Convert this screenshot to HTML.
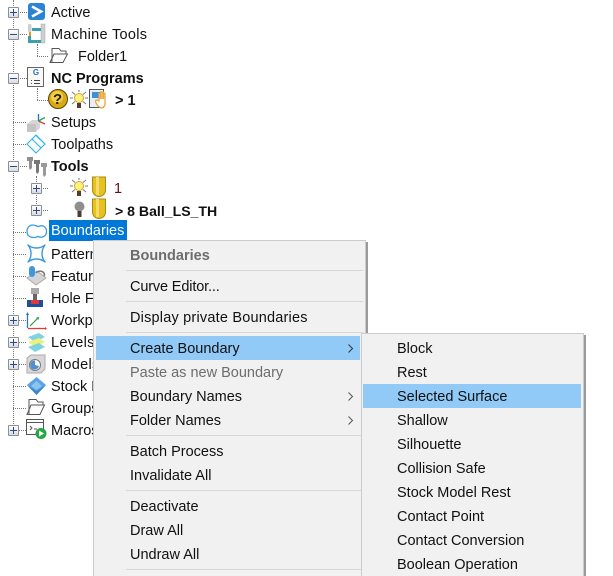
<!DOCTYPE html>
<html><head><meta charset="utf-8"><style>
html,body{margin:0;padding:0;background:#fff}
#r{position:relative;width:613px;height:576px;overflow:hidden;background:#fff;font:14.5px/20px "Liberation Sans",sans-serif;color:#111}
.t{position:absolute;white-space:nowrap;height:20px;margin-top:1px}
.b{font-weight:bold}
.x{position:absolute;width:9px;height:9px;border:1px solid #8a8f98;background:linear-gradient(#fff,#d8dbe0);border-radius:1px}
.x:before{content:"";position:absolute;left:1px;top:4px;width:7px;height:1px;background:#2b4a86}
.x.p:after{content:"";position:absolute;left:4px;top:1px;width:1px;height:7px;background:#2b4a86}
.v{position:absolute;width:0;border-left:1px dotted #777}
.h{position:absolute;height:0;border-top:1px dotted #777}
.m{position:absolute;background:#f1f1f1;border:1px solid #ccc;box-sizing:border-box;box-shadow:2px 2px 0 #9a9a9a}
.s{position:absolute;height:1px;background:#d7d7d7}
.hl{position:absolute;background:#91c9f7}
svg{position:absolute;overflow:visible}
</style></head><body><div id="r">
<div class="v" style="left:13px;top:0;height:430px"></div>
<div class="v" style="left:37px;top:44px;height:12px"></div>
<div class="v" style="left:37px;top:88px;height:12px"></div>
<div class="v" style="left:36px;top:176px;height:34px"></div>
<div class="h" style="left:18px;top:12px;width:9px"></div>
<div class="h" style="left:18px;top:34px;width:9px"></div>
<div class="h" style="left:37px;top:56px;width:11px"></div>
<div class="h" style="left:18px;top:78px;width:9px"></div>
<div class="h" style="left:37px;top:100px;width:11px"></div>
<div class="h" style="left:13px;top:122px;width:13px"></div>
<div class="h" style="left:13px;top:144px;width:13px"></div>
<div class="h" style="left:18px;top:166px;width:9px"></div>
<div class="h" style="left:41px;top:188px;width:7px"></div>
<div class="h" style="left:41px;top:210px;width:7px"></div>
<div class="h" style="left:13px;top:232px;width:13px"></div>
<div class="h" style="left:13px;top:254px;width:13px"></div>
<div class="h" style="left:13px;top:276px;width:13px"></div>
<div class="h" style="left:13px;top:298px;width:13px"></div>
<div class="h" style="left:18px;top:320px;width:8px"></div>
<div class="h" style="left:18px;top:342px;width:8px"></div>
<div class="h" style="left:18px;top:364px;width:8px"></div>
<div class="h" style="left:13px;top:386px;width:13px"></div>
<div class="h" style="left:13px;top:408px;width:13px"></div>
<div class="h" style="left:18px;top:430px;width:8px"></div>

<div class="x p" style="left:8px;top:7px"></div>
<div class="x" style="left:8px;top:29px"></div>
<div class="x" style="left:8px;top:73px"></div>
<div class="x" style="left:8px;top:161px"></div>
<div class="x p" style="left:31px;top:183px"></div>
<div class="x p" style="left:31px;top:205px"></div>
<div class="x p" style="left:8px;top:315px"></div>
<div class="x p" style="left:8px;top:337px"></div>
<div class="x p" style="left:8px;top:359px"></div>
<div class="x p" style="left:8px;top:425px"></div>

<!-- Active -->
<svg style="left:28px;top:3px" width="18" height="18"><rect width="17" height="17" rx="3" fill="#2b83d3"/><path d="M4 3.500L13 8.500L4 13.500" fill="none" stroke="#fff" stroke-width="2.600"/></svg>
<!-- Machine tools -->
<svg style="left:27px;top:23px" width="19" height="21"><rect x="14" y="1" width="4" height="19" fill="#c9cfd2" stroke="#aaa" stroke-width=".5"/><rect x="1" y="17" width="13" height="3" fill="#3f9fa8"/><rect x="5" y="5" width="9" height="3" fill="#3f9fa8"/><rect x="1" y="1" width="3.500" height="8" rx="1.500" fill="#c9cfd2"/><rect x="2" y="9" width="2" height="4" fill="#e8951f"/><rect x="1" y="13" width="3" height="7" fill="#3f9fa8"/></svg>
<!-- Folder1 -->
<svg style="left:49px;top:47px" width="20" height="17"><path d="M3 15V1.500H10L12 4H17V7M1 15.500H14L18.500 7H5L1 15.500Z" fill="#fff" stroke="#555" stroke-width="1"/></svg>
<!-- NC -->
<svg style="left:27px;top:67px" width="18" height="21"><rect x=".5" y=".5" width="16" height="19" fill="#f8f8f8" stroke="#666"/><path d="M4 13.500h1M7 13.500h6M4 16.500h1M7 16.500h6" stroke="#444"/></svg>
<div style="position:absolute;left:32px;top:69px;width:8px;font:bold 8px/8px 'Liberation Sans';color:#2a6fc0;text-align:center">G</div>
<!-- Question -->
<svg style="left:48px;top:89px" width="20" height="20"><circle cx="10" cy="10" r="9.500" fill="#d8a912" stroke="#5a4508"/><circle cx="9" cy="8" r="6" fill="#f2cf4a"/></svg>
<div class="b" style="position:absolute;left:53px;top:91px;font-size:15px;line-height:17px;color:#2a2008">?</div>
<!-- bulb -->
<svg style="left:69px;top:90px" width="19" height="20"><circle cx="10" cy="8" r="4.500" fill="#fff27a" stroke="#c9a93a"/><rect x="8" y="13" width="4" height="5" fill="#5a3a2a"/><path d="M1 8h3M16 8h3M3 2l3 2.500M17 2l-3 2.500M3 14l3-2.500M17 14l-3-2.500M10 0v2" stroke="#777"/></svg>
<!-- hand -->
<svg style="left:89px;top:89px" width="22" height="20"><rect x=".5" y=".5" width="14" height="18" fill="#e8eef5" stroke="#555"/><rect x="3" y="3" width="8" height="6" fill="#3f8fdc"/><path d="M9 17C6 13 6 11 8 11L10 12V4.500h1.500V10V3h1.500V10V3h1.500V10V4.500h1.500V13C16.500 16 15 19 12 19Z" fill="#fff" stroke="#eda63a" stroke-width="1.300"/></svg>
<!-- Setups -->
<svg style="left:26px;top:113px" width="22" height="20"><path d="M1 11L6 7H14V15L10 19H1Z" fill="#d6d6d6"/><path d="M1 11H10V19H1Z" fill="#c4c4c4"/><path d="M12.500 8V1" stroke="#1d6fd0" stroke-width="1.300"/><path d="M12.500 8L19 11" stroke="#d63a3a" stroke-width="1.300"/><path d="M12.500 8L19 4.500" stroke="#2aa44a" stroke-width="1.300"/></svg>
<!-- Toolpaths -->
<svg style="left:26px;top:134px" width="22" height="20" fill="none" stroke="#25b5ea" stroke-width="1.100"><path d="M1 10L10 1L19 10L10 19Z"/><path d="M6 5L15 14M10 1.500L19 10"/><path d="M5 14L14 5" stroke="none"/></svg>
<!-- Tools icon -->
<svg style="left:26px;top:155px" width="22" height="22"><path d="M1 2h6v4h-1v7l-2 2-1-2V6H1Z" fill="#8f8f8f"/><path d="M8 5h6v4h-1v8l-2 2-1-2V9H8Z" fill="#777"/><path d="M15 8h6v4h-1v8l-2 2-1-2V12h-2Z" fill="#999"/></svg>
<!-- row bulb + capsule -->
<svg style="left:69px;top:178px" width="19" height="20"><circle cx="10" cy="8" r="4.500" fill="#fff27a" stroke="#c9a93a"/><rect x="8" y="13" width="4" height="5" fill="#5a3a2a"/><path d="M1 8h3M16 8h3M3 2l3 2.500M17 2l-3 2.500M3 14l3-2.500M17 14l-3-2.500M10 0v2" stroke="#777"/></svg>
<svg style="left:92px;top:177px" width="15" height="20"><path d="M.5 0V13a6.500 6.500 0 0 0 13 0V0Z" fill="#e7c11f" stroke="#a98a12"/><rect x="4" y="0" width="3" height="18" fill="#f4dc6a"/></svg>
<svg style="left:74px;top:201px" width="11" height="18"><circle cx="5.500" cy="5.500" r="5" fill="#8f8f8f"/><rect x="3.500" y="10" width="4" height="6" fill="#4a3a32"/></svg>
<svg style="left:92px;top:199px" width="15" height="20"><path d="M.5 0V13a6.500 6.500 0 0 0 13 0V0Z" fill="#e7c11f" stroke="#a98a12"/><rect x="4" y="0" width="3" height="18" fill="#f4dc6a"/></svg>
<!-- Boundaries -->
<svg style="left:26px;top:223px" width="22" height="18"><path d="M7 2C10 2 10 3.500 13 3.500C15 2 20.500 2.500 20.500 8.500C20.500 14 15 15 12 13.500C9 15 1 15.500 1 8.500C1 4 4 2 7 2Z" fill="#fff" stroke="#3f9ee0" stroke-width="1.300"/></svg>
<!-- Pattern -->
<svg style="left:26px;top:243px" width="21" height="21"><path d="M2 2C7 6 14 6 19 2C15 7 15 14 19 19C14 15 7 15 2 19C6 14 6 7 2 2Z" fill="#fff" stroke="#3a97e0" stroke-width="1.400" stroke-linejoin="round"/></svg>
<!-- Feature -->
<svg style="left:26px;top:265px" width="21" height="22"><path d="M1 13L11 6L20 13L10 20Z" fill="#d5d5d5" stroke="#aaa"/><rect x="3" y="1" width="6" height="11" rx="3" fill="#3f97e0"/><path d="M10 8A4 3 0 0 1 18 11" fill="none" stroke="#777" stroke-width="1.500"/></svg>
<!-- Hole -->
<svg style="left:26px;top:287px" width="18" height="21"><rect x="5" y="1" width="8" height="6" fill="#aaa"/><rect x="7" y="7" width="4" height="9" fill="#666"/><path d="M1 20V13H5V17H13V13H17V20Z" fill="#1f4f9f"/><path d="M5 13V17H13V13" fill="#e23a3a"/></svg>
<!-- Workplane -->
<svg style="left:26px;top:312px" width="21" height="18"><path d="M1.500 16V2" stroke="#2271cc" stroke-width="1.200"/><path d="M0 3L1.500 0L3 3Z" fill="#2271cc"/><path d="M2 16.500H19" stroke="#e33" stroke-width="1.200"/><path d="M19 15L21 16.500L19 18Z" fill="#e33"/><path d="M4 14L12 6" stroke="#2a9d4a" stroke-width="1.200"/><path d="M10 5.500L13 5L12.500 8Z" fill="#2a9d4a"/></svg>
<!-- Levels -->
<svg style="left:27px;top:332px" width="19" height="21"><path d="M1 5L12 1L18 5L8 10Z" fill="#7fd3e0"/><path d="M1 10L12 6L18 10L8 15Z" fill="#eef07a"/><path d="M1 15L12 11L18 15L8 20Z" fill="#7fd3e0"/></svg>
<!-- Model -->
<svg style="left:26px;top:354px" width="20" height="20"><path d="M1 4L5 1H19V15L15 19H1Z" fill="#d8d8d8" stroke="#aaa"/><circle cx="9" cy="11" r="5.500" fill="#fff" stroke="#777"/><path d="M9 11V6.500A4.500 4.500 0 1 0 13 12Z" fill="#4f8fd0"/></svg>
<!-- Stock -->
<svg style="left:26px;top:376px" width="21" height="20"><path d="M10.500 1L20 9L10.500 19L1 9Z" fill="#5ba3e3"/><path d="M10.500 5L16 10L10.500 14L5 10Z" fill="#8cc4f0"/><path d="M1 9L10.500 19L20 9L10.500 15Z" fill="#3e86cc"/></svg>
<!-- Groups -->
<svg style="left:26px;top:398px" width="20" height="18"><path d="M3 16V1.500H10L12 4H17V7M1 16.500H14L18.500 7H5L1 16.500Z" fill="#fff" stroke="#555"/></svg>
<!-- Macro -->
<svg style="left:26px;top:419px" width="21" height="20"><rect x=".5" y=".5" width="17" height="15" fill="#fff" stroke="#555"/><path d="M0 3.500H18" stroke="#555"/><path d="M4 7L6 9L4 11M8 10H11" fill="none" stroke="#555"/><circle cx="15" cy="14.500" r="5.500" fill="#25a745"/><path d="M13 11.500L18 14.500L13 17.500Z" fill="#fff"/></svg>

<div class="t" style="left:51px;top:2px">Active</div>
<div class="t" style="left:51px;top:24px;letter-spacing:.3px">Machine Tools</div>
<div class="t" style="left:78px;top:46px">Folder1</div>
<div class="t b" style="left:51px;top:68px">NC Programs</div>
<div class="t b" style="left:115px;top:90px">&gt; 1</div>
<div class="t" style="left:51px;top:112px">Setups</div>
<div class="t" style="left:51px;top:134px">Toolpaths</div>
<div class="t b" style="left:51px;top:156px">Tools</div>
<div class="t" style="left:114px;top:178px;color:#6b1010">1</div>
<div class="t b" style="left:115px;top:200px;font-size:14.100px">&gt; 8 Ball_LS_TH</div>
<div class="t" style="left:49px;top:220px;width:78px;height:21px;line-height:22px;margin:0;background:#0078d7;color:#fff;text-indent:2px">Boundaries</div>
<div class="t" style="left:51px;top:244px">Patterns</div>
<div class="t" style="left:51px;top:266px">Features</div>
<div class="t" style="left:51px;top:288px">Hole Feature</div>
<div class="t" style="left:51px;top:310px">Workplanes</div>
<div class="t" style="left:51px;top:332px;letter-spacing:.3px">Levels, Sets</div>
<div class="t" style="left:51px;top:354px;letter-spacing:.3px">Models</div>
<div class="t" style="left:51px;top:376px">Stock Models</div>
<div class="t" style="left:51px;top:398px">Groups</div>
<div class="t" style="left:51px;top:420px">Macros</div>

<!-- Menu 1 -->
<div class="m" style="left:93px;top:240px;width:273px;height:340px"></div>
<div class="s" style="left:126px;top:270px;width:237px"></div>
<div class="s" style="left:126px;top:301px;width:237px"></div>
<div class="s" style="left:126px;top:332px;width:237px"></div>
<div class="s" style="left:126px;top:435px;width:235px"></div>
<div class="s" style="left:126px;top:490px;width:235px"></div>
<div class="s" style="left:126px;top:569px;width:235px"></div>
<div class="hl" style="left:96px;top:336px;width:264px;height:24px"></div>
<div class="t b" style="left:130px;top:245px;color:#6d6d6d">Boundaries</div>
<div class="t" style="left:130px;top:276px;letter-spacing:-.15px">Curve Editor...</div>
<div class="t" style="left:130px;top:307px;letter-spacing:.2px">Display private Boundaries</div>
<div class="t" style="left:130px;top:338px">Create Boundary</div>
<div class="t" style="left:130px;top:362px;color:#6d6d6d">Paste as new Boundary</div>
<div class="t" style="left:130px;top:386px">Boundary Names</div>
<div class="t" style="left:130px;top:410px">Folder Names</div>
<div class="t" style="left:130px;top:441px">Batch Process</div>
<div class="t" style="left:130px;top:465px">Invalidate All</div>
<div class="t" style="left:130px;top:496px">Deactivate</div>
<div class="t" style="left:130px;top:520px">Draw All</div>
<div class="t" style="left:130px;top:544px">Undraw All</div>
<svg style="left:348px;top:344px" width="6" height="9" fill="none" stroke="#333"><path d="M.5 .5L4.500 4.500L.5 8.500"/></svg>
<svg style="left:348px;top:392px" width="6" height="9" fill="none" stroke="#555"><path d="M.5 .5L4.500 4.500L.5 8.500"/></svg>
<svg style="left:348px;top:416px" width="6" height="9" fill="none" stroke="#555"><path d="M.5 .5L4.500 4.500L.5 8.500"/></svg>

<!-- Submenu -->
<div class="m" style="left:361px;top:333px;width:223px;height:250px"></div>
<div class="hl" style="left:363px;top:384px;width:218px;height:24px"></div>
<div class="t" style="left:397px;top:338px">Block</div>
<div class="t" style="left:397px;top:362px">Rest</div>
<div class="t" style="left:397px;top:386px">Selected Surface</div>
<div class="t" style="left:397px;top:410px">Shallow</div>
<div class="t" style="left:397px;top:434px">Silhouette</div>
<div class="t" style="left:397px;top:458px">Collision Safe</div>
<div class="t" style="left:397px;top:482px">Stock Model Rest</div>
<div class="t" style="left:397px;top:506px">Contact Point</div>
<div class="t" style="left:397px;top:530px">Contact Conversion</div>
<div class="t" style="left:397px;top:554px">Boolean Operation</div>
</div></body></html>
